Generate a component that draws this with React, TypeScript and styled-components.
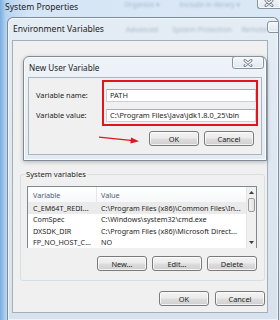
import React from 'react';
import styled, { createGlobalStyle } from 'styled-components';

const font = `'Noto Sans', 'Open Sans', 'DejaVu Sans', sans-serif`;

const GlobalStyle = createGlobalStyle`
  html, body { margin: 0; padding: 0; }
  body { width: 280px; height: 320px; overflow: hidden; }
`;

const Screen = styled.div`
  width: 280px;
  height: 320px;
  overflow: hidden;
  background: linear-gradient(90deg, #78ade2 0px, #b7d3ef 6px, #d6e6f6 30px, #dbe8f5 100%);
  font-family: ${font};
  color: #1e1e1e;
`;

const SysBar = styled.div`
  height: 17px;
  display: flex;
  align-items: flex-start;
  padding-left: 5px;
`;

const Title = styled.span<{ $size?: number }>`
  font-size: ${p => p.$size || 8.5}px;
  white-space: nowrap;
  color: #1c1c1c;
`;

const SysTitle = styled(Title)`
  line-height: 15px;
`;

const Ghost = styled.span<{ $gap: number }>`
  margin-left: ${p => p.$gap}px;
  font-size: 7px;
  white-space: nowrap;
  color: #7f96ae;
  opacity: 0.6;
  filter: blur(0.8px);
`;

const CloseBox = styled.div<{ $w: number; $h: number }>`
  width: ${p => p.$w}px;
  height: ${p => p.$h}px;
  box-sizing: border-box;
  border: 1px solid #8593a3;
  border-radius: 3px;
  background: linear-gradient(#f6f8fb, #dfe7ef);
  box-shadow: inset 0 0 0 1px rgba(255, 255, 255, 0.7);
  display: flex;
  align-items: center;
  justify-content: center;
  flex-shrink: 0;
`;

const CloseGlyph = () => (
  <svg width="10" height="8" viewBox="0 0 10 8">
    <path d="M2 1.5 L8 6.5 M8 1.5 L2 6.5" stroke="#6a7482" strokeWidth="2.8" strokeLinecap="round" />
    <path d="M2 1.5 L8 6.5 M8 1.5 L2 6.5" stroke="#ffffff" strokeWidth="1.1" strokeLinecap="round" />
  </svg>
);

const SysClose = styled(CloseBox)`
  margin-left: auto;
  margin-top: -4px;
  border-right: none;
  border-radius: 0 0 0 3px;
`;

const EnvWindow = styled.div`
  margin-left: 7px;
  width: 272px;
  height: 303px;
  box-sizing: border-box;
  border: 1px solid #7e8a98;
  border-bottom: none;
  border-radius: 6px 6px 0 0;
  background: linear-gradient(#e4ecf4, #d7e2ed);
  box-shadow: inset 0 0 0 1px rgba(255, 255, 255, 0.6);
  display: flex;
  flex-direction: column;
`;

const EnvBar = styled.div`
  height: 22px;
  display: flex;
  align-items: center;
  padding: 0 3px 0 5px;
  overflow: hidden;
`;

const EnvClose = styled(CloseBox)`
  margin-left: auto;
  align-self: flex-start;
  margin-top: 3px;
`;

const EnvClient = styled.div`
  margin: 0 10px 0 4px;
  height: 273px;
  box-sizing: border-box;
  background: #f0f0f0;
  border: 1px solid #a3afbb;
  display: flex;
  flex-direction: column;
`;

const Dialog = styled.div`
  margin: 15px 0 0 10px;
  width: 244px;
  height: 105px;
  box-sizing: border-box;
  border: 1px solid #7e8a98;
  border-radius: 6px 6px 0 0;
  background: linear-gradient(#eef3f8, #e3ebf3);
  box-shadow: inset 0 0 0 1px rgba(255, 255, 255, 0.8), 0 1px 4px rgba(0, 0, 0, 0.25);
  display: flex;
  flex-direction: column;
`;

const DialogBar = styled.div`
  height: 20px;
  display: flex;
  align-items: center;
  padding: 0 2px 0 5px;
`;

const DialogClose = styled(CloseBox)`
  margin-left: auto;
  align-self: flex-start;
  margin-top: -1px;
`;

const DialogClient = styled.div`
  margin: 0 4px 5px 4px;
  height: 78px;
  box-sizing: border-box;
  background: #f0f0f0;
  border: 1px solid #a9b5c1;
  display: flex;
  flex-direction: column;
`;

const Form = styled.div`
  display: flex;
  padding-top: 2px;
`;

const Labels = styled.div`
  width: 73px;
  box-sizing: border-box;
  padding: 9px 0 0 7px;
  display: flex;
  flex-direction: column;
  gap: 7px;
`;

const Label = styled.span`
  font-size: 7.4px;
  line-height: 13px;
  height: 13px;
  white-space: nowrap;
`;

const Highlight = styled.div`
  width: 156px;
  box-sizing: border-box;
  border: 2px solid #e3141c;
  padding: 7px 0 2px 2px;
  display: flex;
  flex-direction: column;
  gap: 7px;
`;

const Input = styled.div`
  height: 13px;
  box-sizing: border-box;
  background: #fff;
  border: 1px solid #c9d0d8;
  border-top-color: #abadb3;
  padding-left: 3px;
  font-size: 7.4px;
  line-height: 11px;
  white-space: nowrap;
  overflow: hidden;
`;

const ButtonRow = styled.div<{ $top: number; $right: number; $gap: number }>`
  display: flex;
  justify-content: flex-end;
  align-items: center;
  margin-top: ${p => p.$top}px;
  padding-right: ${p => p.$right}px;
  gap: ${p => p.$gap}px;
`;

const Button = styled.div`
  width: 50px;
  height: 15px;
  box-sizing: border-box;
  border: 1px solid #7a7a7a;
  border-radius: 3px;
  background: linear-gradient(#f3f3f3 0%, #ebebeb 48%, #dddddd 52%, #cfcfcf 100%);
  box-shadow: inset 0 0 0 1px rgba(255, 255, 255, 0.75);
  display: flex;
  align-items: center;
  justify-content: center;
  font-size: 7.4px;
  color: #1e1e1e;
`;

const Arrow = styled.svg`
  margin-right: 4px;
`;

const Group = styled.fieldset`
  margin: 8px 0 0 7px;
  width: 245px;
  height: 112px;
  box-sizing: border-box;
  border: 1px solid #d5dfe5;
  border-radius: 3px;
  padding: 0 7px 0 6px;
  display: flex;
  flex-direction: column;
`;

const Legend = styled.legend`
  font-size: 7.6px;
  line-height: 11px;
  padding: 0 1px;
  margin-left: -2px;
`;

const List = styled.div`
  margin-top: 6px;
  height: 62px;
  box-sizing: border-box;
  border: 1px solid #828790;
  background: #fff;
  display: grid;
  grid-template-columns: 1fr 10px;
`;

const Rows = styled.div`
  display: flex;
  flex-direction: column;
`;

const Row = styled.div<{ $head?: boolean; $sel?: boolean }>`
  display: grid;
  grid-template-columns: 69px 1fr;
  height: ${p => (p.$head ? 15 : 11.5)}px;
  align-items: center;
  font-size: 7.2px;
  white-space: nowrap;
  background: ${p => (p.$sel ? '#ebebeb' : p.$head ? 'linear-gradient(#ffffff, #f7f8fa)' : '#fff')};
  color: ${p => (p.$head ? '#4c607a' : '#1e1e1e')};
`;

const Cell = styled.span<{ $first?: boolean; $head?: boolean }>`
  padding-left: ${p => (p.$first ? 5 : 4)}px;
  overflow: hidden;
  height: 100%;
  display: flex;
  align-items: center;
  border-right: ${p => (p.$head && p.$first ? '1px solid #e3e6ea' : 'none')};
`;

const Scrollbar = styled.div`
  display: flex;
  flex-direction: column;
  background: #f0f0f0;
  border-left: 1px solid #e6e6e6;
`;

const ScrollBtn = styled.div`
  height: 11px;
  display: flex;
  align-items: center;
  justify-content: center;
`;

const Thumb = styled.div`
  height: 12px;
  margin: 0 1px;
  border: 1px solid #9a9a9a;
  border-radius: 2px;
  background: linear-gradient(90deg, #f3f3f3, #e2e2e2);
`;

const Track = styled.div`
  flex: 1;
`;

const Tri = ({ up }: { up?: boolean }) => (
  <svg width="5" height="3" viewBox="0 0 5 3">
    <path d={up ? 'M0 3 L2.5 0 L5 3 Z' : 'M0 0 L5 0 L2.5 3 Z'} fill="#3c3c3c" />
  </svg>
);

const vars: [string, string][] = [
  ['C_EM64T_REDI...', 'C:\\Program Files (x86)\\Common Files\\In...'],
  ['ComSpec', 'C:\\Windows\\system32\\cmd.exe'],
  ['DXSDK_DIR', 'C:\\Program Files (x86)\\Microsoft Direct...'],
  ['FP_NO_HOST_C...', 'NO'],
];

export default function App() {
  return (
    <Screen>
      <GlobalStyle />
      <SysBar>
        <SysTitle $size={8.6}>System Properties</SysTitle>
        <Ghost $gap={46}>Organize ▾</Ghost>
        <Ghost $gap={20}>Include in library ▾</Ghost>
        <SysClose $w={23} $h={13}>
          <CloseGlyph />
        </SysClose>
      </SysBar>
      <EnvWindow>
        <EnvBar>
          <Title $size={8.6}>Environment Variables</Title>
          <Ghost $gap={22}>Advanced</Ghost>
          <Ghost $gap={14}>System Protection</Ghost>
          <Ghost $gap={10}>Remote</Ghost>
          <EnvClose $w={31} $h={12}>
            <CloseGlyph />
          </EnvClose>
        </EnvBar>
        <EnvClient>
          <Dialog>
            <DialogBar>
              <Title $size={8.2}>New User Variable</Title>
              <DialogClose $w={32} $h={13}>
                <CloseGlyph />
              </DialogClose>
            </DialogBar>
            <DialogClient>
              <Form>
                <Labels>
                  <Label>Variable name:</Label>
                  <Label>Variable value:</Label>
                </Labels>
                <Highlight>
                  <Input>PATH</Input>
                  <Input>C:\Program Files\Java\jdk1.8.0_25\bin</Input>
                </Highlight>
              </Form>
              <ButtonRow $top={5} $right={7} $gap={5}>
                <Arrow width="42" height="10" viewBox="0 0 42 10">
                  <path d="M1 3.2 L35 6.6" stroke="#e3141c" strokeWidth="1.3" />
                  <path d="M41 7.2 L33 3.6 L32.4 9.4 Z" fill="#e3141c" />
                </Arrow>
                <Button>OK</Button>
                <Button>Cancel</Button>
              </ButtonRow>
            </DialogClient>
          </Dialog>
          <Group>
            <Legend>System variables</Legend>
            <List>
              <Rows>
                <Row $head>
                  <Cell $first $head>Variable</Cell>
                  <Cell>Value</Cell>
                </Row>
                {vars.map(([name, value], i) => (
                  <Row key={name} $sel={i === 0}>
                    <Cell $first>{name}</Cell>
                    <Cell>{value}</Cell>
                  </Row>
                ))}
              </Rows>
              <Scrollbar>
                <ScrollBtn>
                  <Tri up />
                </ScrollBtn>
                <Thumb />
                <Track />
                <ScrollBtn>
                  <Tri />
                </ScrollBtn>
              </Scrollbar>
            </List>
            <ButtonRow $top={8} $right={0} $gap={5}>
              <Button>New...</Button>
              <Button>Edit...</Button>
              <Button>Delete</Button>
            </ButtonRow>
          </Group>
          <ButtonRow $top={10} $right={2} $gap={6}>
            <Button>OK</Button>
            <Button>Cancel</Button>
          </ButtonRow>
        </EnvClient>
      </EnvWindow>
    </Screen>
  );
}
